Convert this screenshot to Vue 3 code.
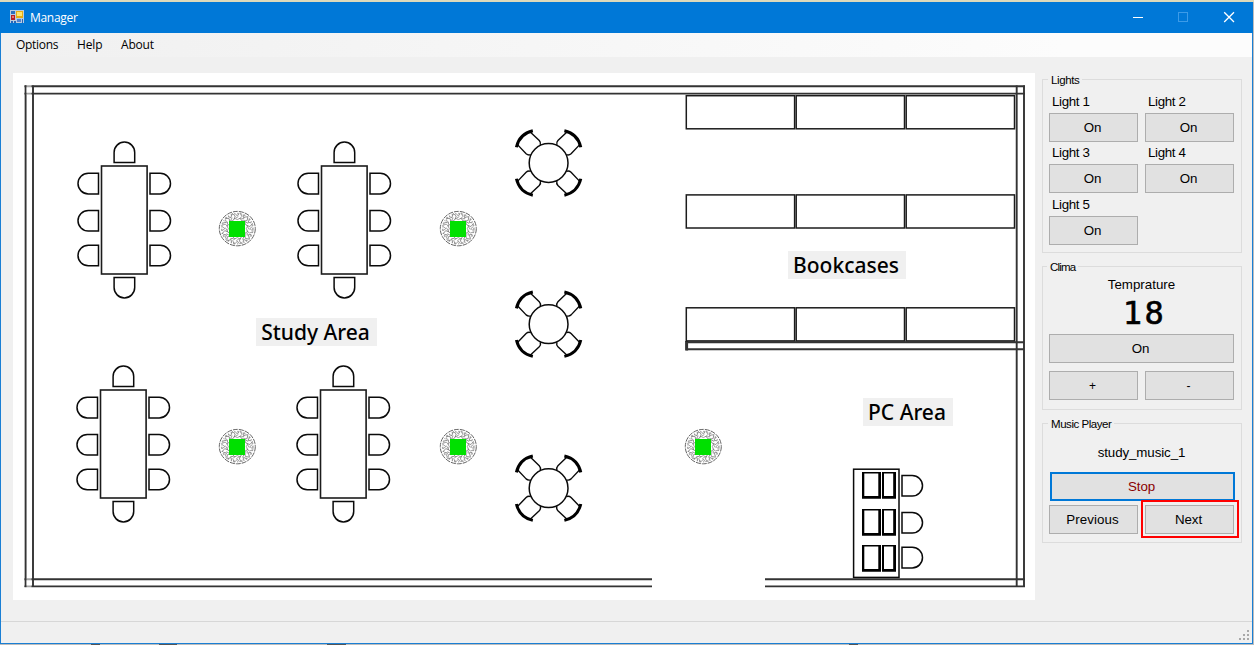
<script setup>
const menus = [
  { label: 'Options', cls: 'm-options' },
  { label: 'Help', cls: 'm-help' },
  { label: 'About', cls: 'm-about' }
]
const lights = [1, 2, 3, 4, 5]
const desks = [[0, 0], [220, 0], [-1, 224], [219, 224]]
const sideChairs = [183.6, 220.8, 255.5]
const roundTables = [163, 324.2, 488.2]
const lamps = [[237.3, 228.6], [458.3, 228.6], [237.3, 446.6], [458.3, 446.6], [703.3, 446.6]]
const shelfRows = [95.7, 194.9, 307.8]
const shelfCols = [686.3, 796.2, 906.2]
const computers = [472, 509, 545]
const pcChairs = [485.8, 522.8, 557.6]
const gripDots = [[8, 0], [4, 4], [8, 4], [0, 8], [4, 8], [8, 8]]
const petals = Array.from({ length: 12 }, (_, i) => i * 30)
</script>

<template>
  <div class="screen">
    <div class="window">
      <header class="titlebar">
        <svg class="app-icon" width="15" height="14" viewBox="0 0 15 14" shape-rendering="crispEdges">
          <rect width="14" height="13" fill="#b8cce0" />
          <rect x="1" y="1" width="4" height="3" fill="#2c70bd" />
          <rect x="1" y="5" width="4" height="5" fill="#b52028" />
          <rect x="2" y="6" width="2" height="2" fill="#ed7168" />
          <rect x="6" y="1" width="7" height="7" fill="#e5ad13" />
          <rect x="7" y="2" width="5" height="4" fill="#ffe56c" />
          <rect x="1" y="11" width="2" height="2" fill="#2765b8" />
          <rect x="4" y="11" width="2" height="2" fill="#2765b8" />
          <rect x="7" y="9" width="4" height="3" fill="#4f82d0" />
          <rect x="12" y="9" width="1" height="4" fill="#2765b8" />
        </svg>
        <span class="title">Manager</span>
        <svg class="controls" width="138" height="31" viewBox="0 0 138 31" fill="none">
          <path d="M18 15.5H28" stroke="#fff" />
          <rect x="63.5" y="10.5" width="9" height="9" stroke="#3c9be8" />
          <path d="M109.2 10.2L119 20M119 10.2L109.2 20" stroke="#fff" stroke-width="1.3" />
        </svg>
      </header>
      <nav class="menubar">
        <span v-for="m in menus" :key="m.label" :class="m.cls">{{ m.label }}</span>
      </nav>

      <main class="content">
        <svg class="plan" width="1022" height="527" viewBox="13 73 1022 527" fill="none" stroke="#0a0a0a" stroke-width="1.5">
          <defs>
            <path id="seat" d="M-10.3 10.2V0A10.3 10.3 0 0 1 10.3 0V10.2Z" />
            <g id="lounge">
              <path d="M-9 -35L-9.3 -22.5Q-9.2 -19.8 -6.8 -18.6M9 -35L9.3 -22.5Q9.2 -19.8 6.8 -18.6" stroke-width="1.4" />
              <path d="M-11.6 -33.9Q0 -41.2 11.6 -33.9" stroke-width="3" stroke="#000" />
            </g>
            <g id="lamp">
              <ellipse rx="18" ry="17.2" stroke="#666" stroke-width="1" stroke-dasharray="5 1" />
              <ellipse rx="15.6" ry="15" stroke="#aaa" stroke-width="1.6" stroke-dasharray="2 1.5 1 2" />
              <g stroke="#777" stroke-width=".7">
                <g v-for="a in petals" :key="a" :transform="`rotate(${a})`">
                  <path d="M-2 -15L0 -12.5L2 -15M-1.5 -10.5L1 -12" />
                  <path d="M3 -16L4.5 -12L2 -9.5M-3 -10.5L0 -9L3 -10.5" />
                </g>
              </g>
              <rect x="-8.3" y="-7.6" width="16" height="16" fill="#00e000" stroke="none" />
            </g>
          </defs>

          <g stroke="#333" stroke-width="1.9">
            <path d="M24.5 86.2H1025M24.5 93.6H1025M24.5 579.3H652M24.5 586.4H652M765 579.3H1025M765 586.4H1025" />
            <path d="M25.6 85.5V587M33 85.5V587M1016.7 85.5V587M1024 85.5V587" />
            <path d="M686 342.3H1024M686 349.3H1024" />
            <path d="M686.6 341V350.5" stroke-width="3" />
          </g>
          <path d="M29 85V95M29 578V588" stroke="#fff" stroke-width="5" stroke-opacity=".55" />

          <g v-for="y in shelfRows" :key="y" stroke="#1c1c1c">
            <rect v-for="x in shelfCols" :key="x" :x="x" :y="y" width="108.3" height="33.1" />
          </g>

          <g v-for="(d, i) in desks" :key="i" :transform="`translate(${d[0]} ${d[1]})`">
            <rect x="101.5" y="166" width="45.6" height="108" stroke="#1c1c1c" stroke-width="1.6" />
            <use href="#seat" transform="translate(124.4 152.4)" />
            <use href="#seat" transform="translate(124.4 287.6) rotate(180)" />
            <template v-for="y in sideChairs" :key="y">
              <use href="#seat" :transform="`translate(88.3 ${y}) rotate(-90)`" />
              <use href="#seat" :transform="`translate(160.2 ${y}) rotate(90)`" />
            </template>
          </g>

          <g v-for="y in roundTables" :key="y" :transform="`translate(548.6 ${y})`">
            <circle r="19.4" />
            <use v-for="a in [45, 135, 225, 315]" :key="a" href="#lounge" :transform="`rotate(${a})`" />
          </g>

          <use v-for="(l, i) in lamps" :key="i" href="#lamp" :transform="`translate(${l[0]} ${l[1]})`" />

          <rect x="853.6" y="469.2" width="45.4" height="108.2" />
          <g v-for="y in computers" :key="y" fill="#000" stroke="none">
            <path fill-rule="evenodd" :d="`M862 ${y}h19v26.8h-19zM864.3 ${y + 1.5}v22.6h14v-22.6z`" />
            <path fill-rule="evenodd" :d="`M882 ${y}h14v26.8h-14zM884 ${y + 1.5}v22.6h9.2v-22.6z`" />
          </g>
          <use v-for="y in pcChairs" :key="y" href="#seat" :transform="`translate(912.2 ${y}) rotate(90)`" />
        </svg>
        <span class="area study">Study Area</span>
        <span class="area books">Bookcases</span>
        <span class="area pcs">PC Area</span>

        <aside class="side">
          <section class="group lights">
            <h2 class="cap-lights">Lights</h2>
            <div class="grid">
              <div v-for="n in lights" :key="n" class="light">
                <label>Light {{ n }}</label>
                <button>On</button>
              </div>
            </div>
          </section>
          <section class="group clima">
            <h2 class="cap-clima">Clima</h2>
            <div class="temp-label">Temprature</div>
            <div class="temp">18</div>
            <button class="wide">On</button>
            <div class="pair"><button class="sign">+</button><button class="sign">-</button></div>
          </section>
          <section class="group music">
            <h2 class="cap-music">Music Player</h2>
            <div class="track">study_music_1</div>
            <button class="wide stop">Stop</button>
            <div class="pair">
              <button class="prev">Previous</button>
              <button class="next">Next</button>
              <span class="highlight"></span>
            </div>
          </section>
        </aside>
      </main>

      <footer class="status">
        <svg width="10" height="10" shape-rendering="crispEdges">
          <rect v-for="(g, i) in gripDots" :key="i" :x="g[0]" :y="g[1]" width="2" height="2" fill="#a8a8a8" />
        </svg>
      </footer>
    </div>
    <div class="behind"><i class="s1"></i><i class="s2"></i><i class="s3"></i><i class="s4"></i></div>
  </div>
</template>

<style>
body { background: #bdbdbd; overflow: hidden; }
</style>
<style scoped>
* { box-sizing: border-box; }
.screen { width: 1254px; height: 645px; padding-top: 2px; background: linear-gradient(#dcd9bb 0 2px, #bdbdbd 2px); font-family: "Liberation Sans", Arial, sans-serif; font-size: 13.33px; color: #000; overflow: hidden; }
.window { width: 1253px; height: 642px; border: solid #1a7fd4; border-width: 0 1px 1px; background: #f0f0f0; display: flex; flex-direction: column; }
.titlebar { flex: none; height: 31px; margin: 0 -1px; padding-left: 10px; background: #0078d7; display: flex; align-items: center; }
.app-icon { margin-top: -1px; }
.title { margin-left: 5px; color: #fff; font: 12px "Open Sans", sans-serif; letter-spacing: -.3px; }
.controls { margin-left: auto; margin-right: 0; }
.menubar { flex: none; height: 24px; padding: 0 0 2px 15px; display: flex; align-items: center; font: 12px "Open Sans", sans-serif; background: linear-gradient(90deg, #f0f0f0, #fcfcfc 85%); }
.menubar span { white-space: nowrap; }
.m-options { width: 61px; letter-spacing: -.3px; }
.m-help { width: 44px; letter-spacing: -.15px; }
.m-about { letter-spacing: -.2px; }
.content { flex: 1; position: relative; display: flex; padding: 16px 0 0 12px; }
.plan { flex: none; display: block; background: #fff; }
.area { position: absolute; display: flex; align-items: center; justify-content: center; height: 28px; padding: 0 2px 1px 0; background: #f0f0f0; white-space: nowrap; font: 500 21px "Noto Sans", "Open Sans", sans-serif; }
.study { left: 255px; top: 261px; width: 121px; }
.books { left: 787px; top: 194px; width: 118px; }
.pcs { left: 862px; top: 341px; width: 90px; }
.side { width: 200px; margin-left: 7px; padding-top: 6px; display: flex; flex-direction: column; gap: 13px; }
.group { border: 1px solid #dcdcdc; padding: 0 7px 0 6px; }
.lights { height: 174px; }
.clima { height: 144px; }
.music { height: 120px; }
h2 { display: block; width: max-content; height: 14px; margin: -7px 0 0 -1px; padding: 0 3px; background: #f0f0f0; font-weight: 400; font-size: 11.5px; line-height: 14px; white-space: nowrap; }
.cap-lights { letter-spacing: -.4px; }
.cap-clima { letter-spacing: -.8px; margin-left: -2px; }
.cap-music { letter-spacing: -.45px; }
.grid { display: grid; grid-template: 48px 49px 48px / 89px 89px; column-gap: 7px; row-gap: 3px; margin-top: 7px; }
.light { display: flex; flex-direction: column; justify-content: flex-start; }
.light label { height: 19px; line-height: 15px; padding-left: 3px; letter-spacing: -.35px; }
button { display: block; width: 89px; height: 29px; padding: 0 2px 0 0; border: 1px solid #adadad; border-radius: 0; background: #e1e1e1; color: #000; font: 13.33px "Liberation Sans", Arial, sans-serif; letter-spacing: -.1px; }
.wide { width: 185px; }
.temp-label { margin-top: 3px; height: 16px; line-height: 16px; text-align: center; }
.temp { height: 41px; line-height: 41px; text-align: center; font-family: "DejaVu Sans Mono", monospace; font-size: 32px; letter-spacing: 2.5px; padding-left: 6px; -webkit-text-stroke: .6px #000; }
.pair { position: relative; display: flex; gap: 7px; margin-top: 8px; }
.sign { font-size: 12px; }
.track { margin-top: 14px; height: 27px; line-height: 16px; text-align: center; letter-spacing: -.1px; }
.stop { position: relative; left: 1px; border: 2px solid #0078d7; color: #8b0000; }
.music .pair { margin-top: 4px; }
.prev { letter-spacing: .1px; }
.highlight { position: absolute; left: 92px; top: -5px; width: 98px; height: 38px; border: 2px solid #f00; }
.status { flex: none; height: 22px; border-top: 1px solid #d7d7d7; display: flex; justify-content: flex-end; align-items: flex-end; padding: 0 3px 3px; }
.behind { height: 1px; display: flex; background: #bdbdbd; }
.behind i { height: 1px; background: #555; }
.s1 { margin-left: 91px; width: 9px; }
.s2 { margin-left: 59px; width: 18px; }
.s3 { margin-left: 150px; width: 19px; }
.s4 { margin-left: 503px; width: 9px; }
</style>
